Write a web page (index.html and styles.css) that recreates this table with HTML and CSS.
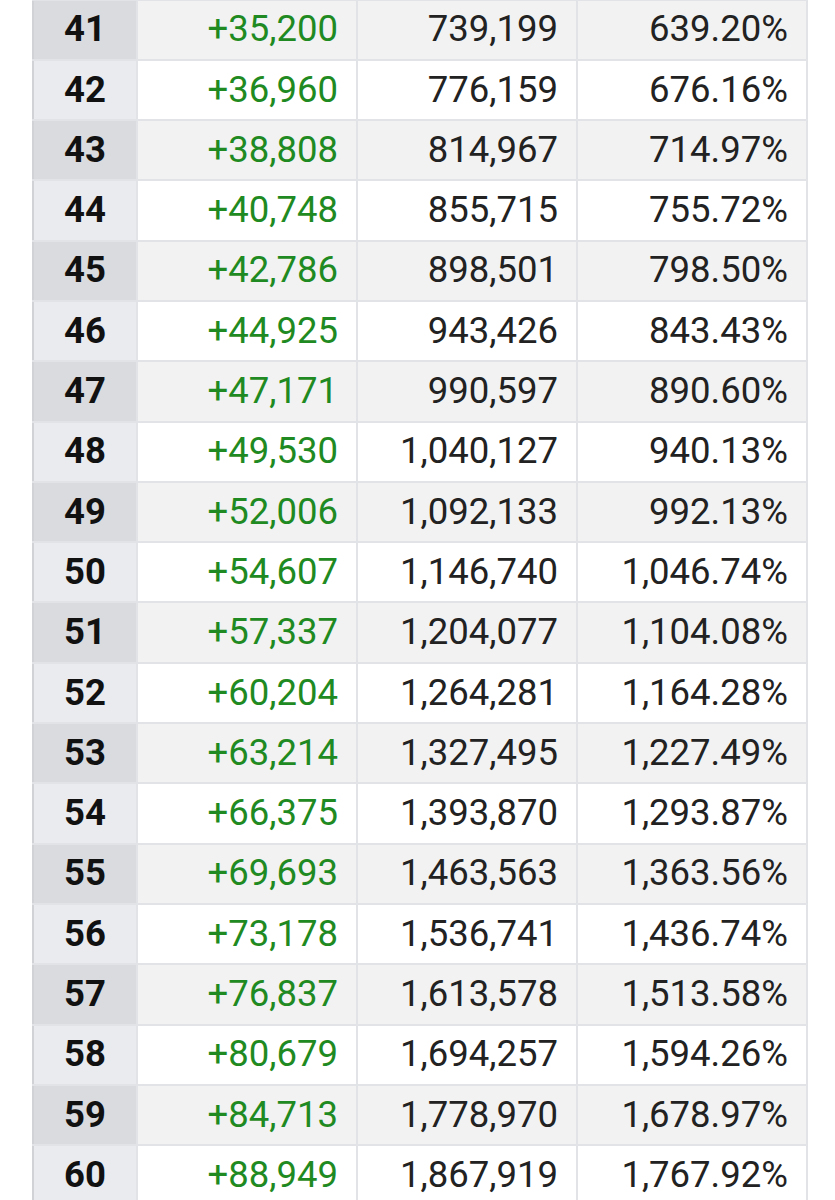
FILE: index.html
```html
<!DOCTYPE html>
<html>
<head>
<meta charset="utf-8">
<link rel="stylesheet" href="styles.css">
</head>
<body>
<table class="growth">
<colgroup><col class="c-lvl"><col class="c-inc"><col class="c-tot"><col class="c-pct"></colgroup>
<tbody>
<tr><th>41</th><td class="inc">+35,200</td><td>739,199</td><td>639.20%</td></tr>
<tr><th>42</th><td class="inc">+36,960</td><td>776,159</td><td>676.16%</td></tr>
<tr><th>43</th><td class="inc">+38,808</td><td>814,967</td><td>714.97%</td></tr>
<tr><th>44</th><td class="inc">+40,748</td><td>855,715</td><td>755.72%</td></tr>
<tr><th>45</th><td class="inc">+42,786</td><td>898,501</td><td>798.50%</td></tr>
<tr><th>46</th><td class="inc">+44,925</td><td>943,426</td><td>843.43%</td></tr>
<tr><th>47</th><td class="inc">+47,171</td><td>990,597</td><td>890.60%</td></tr>
<tr><th>48</th><td class="inc">+49,530</td><td>1,040,127</td><td>940.13%</td></tr>
<tr><th>49</th><td class="inc">+52,006</td><td>1,092,133</td><td>992.13%</td></tr>
<tr><th>50</th><td class="inc">+54,607</td><td>1,146,740</td><td>1,046.74%</td></tr>
<tr><th>51</th><td class="inc">+57,337</td><td>1,204,077</td><td>1,104.08%</td></tr>
<tr><th>52</th><td class="inc">+60,204</td><td>1,264,281</td><td>1,164.28%</td></tr>
<tr><th>53</th><td class="inc">+63,214</td><td>1,327,495</td><td>1,227.49%</td></tr>
<tr><th>54</th><td class="inc">+66,375</td><td>1,393,870</td><td>1,293.87%</td></tr>
<tr><th>55</th><td class="inc">+69,693</td><td>1,463,563</td><td>1,363.56%</td></tr>
<tr><th>56</th><td class="inc">+73,178</td><td>1,536,741</td><td>1,436.74%</td></tr>
<tr><th>57</th><td class="inc">+76,837</td><td>1,613,578</td><td>1,513.58%</td></tr>
<tr><th>58</th><td class="inc">+80,679</td><td>1,694,257</td><td>1,594.26%</td></tr>
<tr><th>59</th><td class="inc">+84,713</td><td>1,778,970</td><td>1,678.97%</td></tr>
<tr><th>60</th><td class="inc">+88,949</td><td>1,867,919</td><td>1,767.92%</td></tr>
</tbody>
</table>
</body>
</html>
```
FILE: styles.css
```css
html, body {
  margin: 0;
  padding: 0;
  background: #ffffff;
}
body {
  padding-left: 32px;
  font-family: Roboto, "Noto Sans", sans-serif;
  font-size: 36.5px;
  color: #222222;
  overflow: hidden;
  height: 1200px;
}
.growth {
  border-collapse: collapse;
  table-layout: fixed;
  width: 776px;
  margin-top: -1.5px;
  border: 2px solid #dcdee1;
}
.c-lvl { width: 104px; }
.c-inc { width: 220px; }
.c-tot { width: 220px; }
.c-pct { width: 230px; }
.growth th,
.growth td {
  border: 2px solid #e1e3e6;
  height: 60.3px;
  box-sizing: border-box;
  padding: 0 18px 0 0;
  line-height: 1.17;
  white-space: nowrap;
}
.growth th {
  text-align: center;
  font-weight: 700;
  padding: 0;
  color: #111111;
  background: #e9ebee;
  border-left-color: #d0d2d6;
}
.growth td {
  text-align: right;
  font-weight: 400;
  color: #222222;
  background: #ffffff;
}
.growth td.inc {
  color: #1f8a21;
}
.growth tr:nth-child(odd) th {
  background: #d9dbde;
}
.growth tr:nth-child(odd) td {
  background: #f2f2f3;
}
```
